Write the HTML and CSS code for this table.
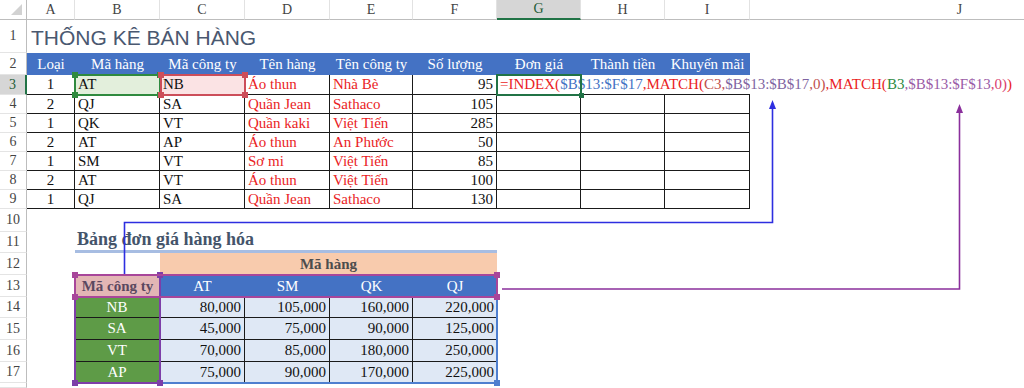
FILE: index.html
```html
<!DOCTYPE html>
<html lang="vi">
<head>
<meta charset="utf-8">
<title>Thống kê bán hàng</title>
<link rel="stylesheet" href="styles.css">
</head>
<body>
<div class="wrap">
  <div class="sheet">
    <!-- column headers -->
    <div class="corner"></div>
    <div class="cell ch">A</div><div class="cell ch">B</div><div class="cell ch">C</div><div class="cell ch">D</div><div class="cell ch">E</div>
    <div class="cell ch">F</div><div class="cell ch on">G</div><div class="cell ch">H</div><div class="cell ch">I</div><div class="cell ch">J</div>

    <!-- row 1 -->
    <div class="cell rh">1</div>
    <div class="cell title span10">THỐNG KÊ BÁN HÀNG</div>

    <!-- row 2 -->
    <div class="cell rh">2</div>
    <div class="cell hd">Loại</div><div class="cell hd">Mã hàng</div><div class="cell hd">Mã công ty</div><div class="cell hd">Tên hàng</div><div class="cell hd">Tên công ty</div>
    <div class="cell hd">Số lượng</div><div class="cell hd">Đơn giá</div><div class="cell hd">Thành tiền</div><div class="cell hd">Khuyến mãi</div><div class="cell"></div>

    <!-- row 3 -->
    <div class="cell rh on">3</div>
    <div class="cell t c">1</div><div class="cell t fillg">AT</div><div class="cell t fillp">NB</div><div class="cell t red">Áo thun</div><div class="cell t red">Nhà Bè</div>
    <div class="cell t r">95</div>
    <div class="cell tb fx"><span class="f-red">=INDEX(</span><span class="f-blue">$B$13:$F$17</span><span class="f-red">,MATCH(</span><span class="f-brn">C3,</span><span class="f-pur">$B$13:$B$17</span><span class="f-brn">,0)</span><span class="f-red">,MATCH(</span><span class="f-grn">B3</span><span class="f-mag">,$B$13:$F$13</span><span class="f-pnk">,0)</span><span class="f-red">)</span></div>
    <div class="cell tb"></div><div class="cell tb"></div><div class="cell"></div>

    <!-- row 4 -->
    <div class="cell rh">4</div>
    <div class="cell t c">2</div><div class="cell t">QJ</div><div class="cell t">SA</div><div class="cell t red">Quần Jean</div><div class="cell t red">Sathaco</div>
    <div class="cell t r">105</div><div class="cell t"></div><div class="cell t"></div><div class="cell t"></div><div class="cell"></div>

    <!-- row 5 -->
    <div class="cell rh">5</div>
    <div class="cell t c">1</div><div class="cell t">QK</div><div class="cell t">VT</div><div class="cell t red">Quần kaki</div><div class="cell t red">Việt Tiến</div>
    <div class="cell t r">285</div><div class="cell t"></div><div class="cell t"></div><div class="cell t"></div><div class="cell"></div>

    <!-- row 6 -->
    <div class="cell rh">6</div>
    <div class="cell t c">2</div><div class="cell t">AT</div><div class="cell t">AP</div><div class="cell t red">Áo thun</div><div class="cell t red">An Phước</div>
    <div class="cell t r">50</div><div class="cell t"></div><div class="cell t"></div><div class="cell t"></div><div class="cell"></div>

    <!-- row 7 -->
    <div class="cell rh">7</div>
    <div class="cell t c">1</div><div class="cell t">SM</div><div class="cell t">VT</div><div class="cell t red">Sơ mi</div><div class="cell t red">Việt Tiến</div>
    <div class="cell t r">85</div><div class="cell t"></div><div class="cell t"></div><div class="cell t"></div><div class="cell"></div>

    <!-- row 8 -->
    <div class="cell rh">8</div>
    <div class="cell t c">2</div><div class="cell t">AT</div><div class="cell t">VT</div><div class="cell t red">Áo thun</div><div class="cell t red">Việt Tiến</div>
    <div class="cell t r">100</div><div class="cell t"></div><div class="cell t"></div><div class="cell t"></div><div class="cell"></div>

    <!-- row 9 -->
    <div class="cell rh">9</div>
    <div class="cell t c">1</div><div class="cell t">QJ</div><div class="cell t">SA</div><div class="cell t red">Quần Jean</div><div class="cell t red">Sathaco</div>
    <div class="cell t r">130</div><div class="cell t"></div><div class="cell t"></div><div class="cell t"></div><div class="cell"></div>

    <!-- row 10 -->
    <div class="cell rh">10</div>
    <div class="cell span10"></div>

    <!-- row 11 -->
    <div class="cell rh">11</div>
    <div class="cell"></div>
    <div class="cell ul sub">Bảng đơn giá hàng hóa</div><div class="cell ul"></div><div class="cell ul"></div><div class="cell ul"></div><div class="cell ul"></div>
    <div class="cell span4"></div>

    <!-- row 12 -->
    <div class="cell rh">12</div>
    <div class="cell"></div><div class="cell"></div>
    <div class="cell peach span4">Mã hàng</div>
    <div class="cell span4"></div>

    <!-- row 13 -->
    <div class="cell rh">13</div>
    <div class="cell"></div>
    <div class="cell rose">Mã công ty</div>
    <div class="cell bh">AT</div><div class="cell bh">SM</div><div class="cell bh">QK</div><div class="cell bh">QJ</div>
    <div class="cell span4"></div>

    <!-- row 14 -->
    <div class="cell rh">14</div>
    <div class="cell"></div>
    <div class="cell grn t">NB</div>
    <div class="cell lb t r">80,000</div><div class="cell lb t r">105,000</div><div class="cell lb t r">160,000</div><div class="cell lb tb r">220,000</div>
    <div class="cell span4"></div>

    <!-- row 15 -->
    <div class="cell rh">15</div>
    <div class="cell"></div>
    <div class="cell grn t">SA</div>
    <div class="cell lb t r">45,000</div><div class="cell lb t r">75,000</div><div class="cell lb t r">90,000</div><div class="cell lb tb r">125,000</div>
    <div class="cell span4"></div>

    <!-- row 16 -->
    <div class="cell rh">16</div>
    <div class="cell"></div>
    <div class="cell grn t">VT</div>
    <div class="cell lb t r">70,000</div><div class="cell lb t r">85,000</div><div class="cell lb t r">180,000</div><div class="cell lb tb r">250,000</div>
    <div class="cell span4"></div>

    <!-- row 17 -->
    <div class="cell rh">17</div>
    <div class="cell"></div>
    <div class="cell grn vr">AP</div>
    <div class="cell lb vr r">75,000</div><div class="cell lb vr r">90,000</div><div class="cell lb vr r">170,000</div><div class="cell lb r">225,000</div>
    <div class="cell span4"></div>

    <!-- row 18 (partial) -->
    <div class="cell rh"></div>
    <div class="cell span10"></div>
  </div>

  <!-- reference range boxes -->
  <div class="box bx-b3"><i class="h tl"></i><i class="h tr"></i><i class="h bl"></i><i class="h br"></i></div>
  <div class="box bx-c3"><i class="h tl"></i><i class="h tr"></i><i class="h bl"></i><i class="h br"></i></div>
  <div class="box bx-act"><i class="h br small"></i></div>
  <div class="box bx-blue"><i class="h tl"></i><i class="h tr"></i><i class="h bl"></i><i class="h br"></i></div>
  <div class="box bx-pur"><i class="h tl"></i><i class="h tr"></i><i class="h bl"></i><i class="h br"></i></div>
  <div class="box bx-mag"><i class="h tl"></i><i class="h tr"></i><i class="h bl"></i><i class="h br"></i></div>

  <!-- arrows -->
  <svg class="arrows" width="1024" height="388" viewBox="0 0 1024 388">
    <path d="M124.5 274 V222.5 H772.5 V108" fill="none" stroke="#2d2ee0" stroke-width="1.6"/>
    <polygon points="772.5,100 769,109 776,109" fill="#2d2ee0"/>
    <path d="M502 289 H959.5 V112" fill="none" stroke="#8a2f9c" stroke-width="1.6"/>
    <polygon points="959.5,104 956,113 963,113" fill="#8a2f9c"/>
  </svg>
</div>
</body>
</html>
```

FILE: styles.css
```css
* { box-sizing: border-box; }

html, body {
  margin: 0;
  padding: 0;
  background: #fff;
  overflow: hidden;
}

body {
  width: 1024px;
  height: 388px;
  font-family: "Liberation Serif", "Times New Roman", serif;
  font-size: 15px;
  color: #111;
}

.wrap {
  position: relative;
  width: 1024px;
  height: 388px;
  overflow: hidden;
}

.sheet {
  display: grid;
  grid-template-columns: 27px 48px 85px 85px 85px 83px 84px 84px 84px 85px 420px;
  grid-template-rows: 20px 33px 22px 20px repeat(6, 19px) 23px 21px 22px 22px 21px 22px 22px 21px 5px;
}

.cell {
  display: flex;
  align-items: center;
  padding: 0 3px;
  white-space: nowrap;
  min-width: 0;
  line-height: 1;
}

.span10 { grid-column: span 10; }
.span4 { grid-column: span 4; }

/* headers */
.corner {
  position: relative;
  border-right: 1px solid #bdbdbd;
  border-bottom: 1px solid #bdbdbd;
}
.corner::after {
  content: "";
  position: absolute;
  right: 4px;
  bottom: 4px;
  width: 11px;
  height: 11px;
  background: #d2d2d2;
  clip-path: polygon(100% 0, 100% 100%, 0 100%);
}

.ch {
  justify-content: center;
  color: #444;
  font-size: 14px;
  border-right: 1px solid #e2e2e2;
  border-bottom: 1px solid #bdbdbd;
}
.ch.on {
  background: #d6d6d6;
  border-bottom: 2px solid #217346;
  color: #1e5c36;
}

.rh {
  justify-content: center;
  color: #444;
  font-size: 14px;
  padding: 0;
  border-right: 1px solid #bdbdbd;
  border-bottom: 1px solid #e4e4e4;
}
.rh.on {
  background: #d6d6d6;
  border-right: 2px solid #217346;
  color: #1e5c36;
}

/* title */
.title {
  font-family: "Liberation Sans", Arial, sans-serif;
  font-size: 21px;
  color: #4a5870;
  padding-left: 4px;
  padding-top: 2px;
}

/* top table */
.hd {
  background: #4472c4;
  color: #fff;
  justify-content: center;
}

.t {
  border-right: 1px solid #1a1a1a;
  border-bottom: 1px solid #1a1a1a;
}
.tb { border-bottom: 1px solid #1a1a1a; }
.vr { border-right: 1px solid #1a1a1a; }

.c { justify-content: center; }
.r { justify-content: flex-end; }
.red { color: #ea1d25; }

.fillg { background: #e3efdc; }
.fillp { background: #fbe3e4; }

.fx { padding-left: 3px; }
.f-red { color: #ea1d25; }
.f-blue { color: #4472c4; }
.f-brn { color: #c0504d; }
.f-pur { color: #8064a2; }
.f-grn { color: #2f8a3f; }
.f-mag { color: #9a5ba6; }
.f-pnk { color: #d9406e; }

/* bottom table */
.ul { border-bottom: 3px solid #a7bde2; }
.sub {
  font-weight: bold;
  font-size: 18px;
  color: #44546a;
  padding-left: 2px;
  align-items: flex-end;
  padding-bottom: 2px;
}

.peach {
  background: #f8cbad;
  justify-content: center;
  font-weight: bold;
  color: #4d4d4d;
}

.rose {
  background: #e3b6b5;
  justify-content: center;
  font-weight: bold;
  color: #5b4860;
}

.bh {
  background: #4472c4;
  color: #fff;
  justify-content: center;
}

.grn {
  background: #5e9b47;
  color: #fff;
  justify-content: center;
}

.lb { background: #dfe8f5; }

/* reference boxes (overlay) */
.box {
  position: absolute;
  border: 2px solid currentColor;
  pointer-events: none;
}
.box .h {
  position: absolute;
  width: 6px;
  height: 6px;
  background: currentColor;
}
.box .h.small { width: 5px; height: 5px; }
.h.tl { left: -4px; top: -4px; }
.h.tr { right: -4px; top: -4px; }
.h.bl { left: -4px; bottom: -4px; }
.h.br { right: -4px; bottom: -4px; }

.bx-b3 { left: 74px; top: 74px; width: 87px; height: 22px; color: #2f8a3f; }
.bx-c3 { left: 160px; top: 74px; width: 86px; height: 22px; color: #cc4e5a; }
.bx-act { left: 496px; top: 74px; width: 86px; height: 22px; color: #217346; }
.bx-blue { left: 74px; top: 274px; width: 424px; height: 110px; color: #4f7fcf; }
.bx-pur { left: 74px; top: 274px; width: 87px; height: 110px; color: #7d3ea8; }
.bx-mag { left: 74px; top: 274px; width: 424px; height: 24px; color: #a8469a; }

.arrows {
  position: absolute;
  left: 0;
  top: 0;
  pointer-events: none;
}
```
